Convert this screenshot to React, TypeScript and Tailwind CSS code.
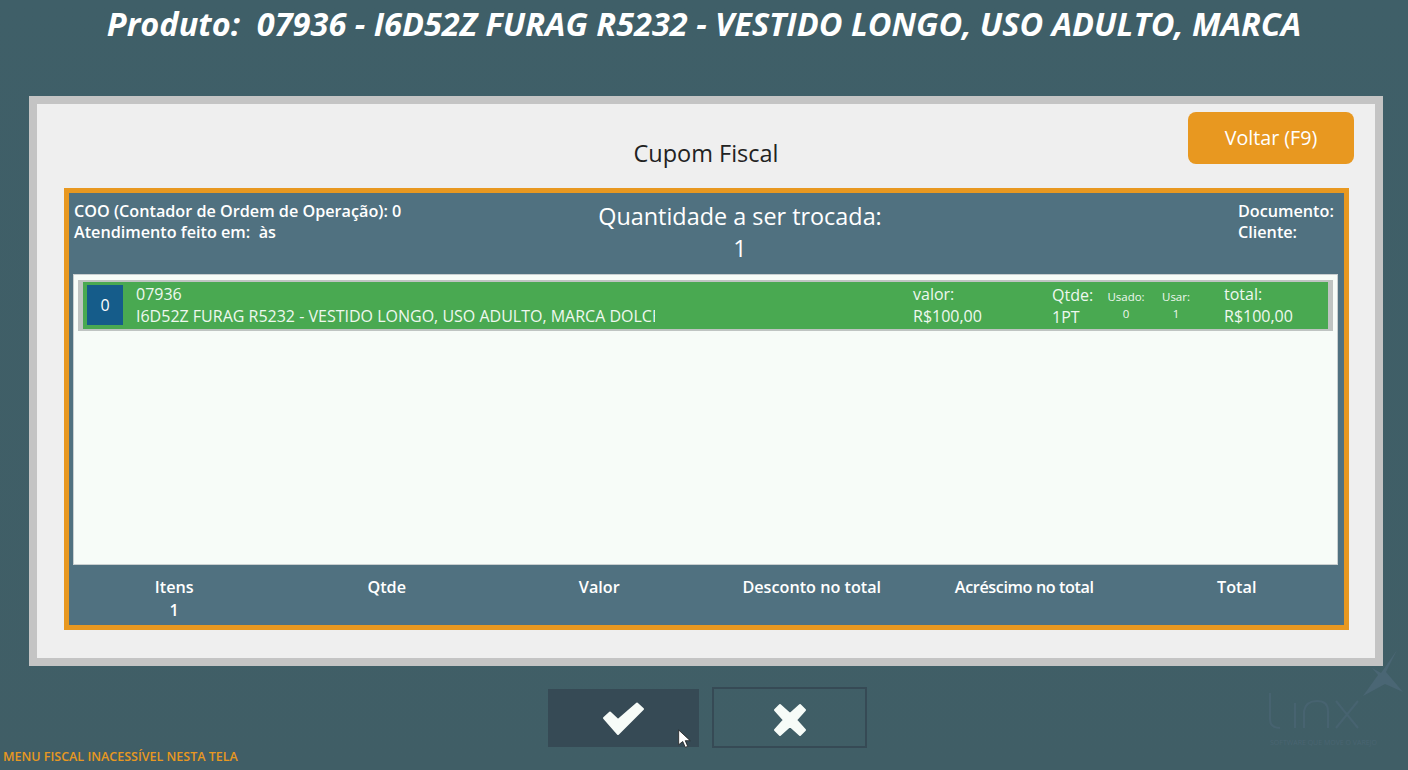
const font = { fontFamily: '"Open Sans", "Noto Sans", sans-serif' };

function Logo() {
  return (
    <div className="absolute left-[1260px] top-[645px] w-[148px] h-[110px]">
      <svg viewBox="0 0 148 110" className="w-full h-full" fill="none">
        <path d="M137 5 L126 27 L143 47 L125 39 L103 51 L118 30 L112 23 L121 28 Z" fill="#4a6674" />
        <path d="M10 48 V74 Q10 83 20 83 M35 58 V83 M44 83 V66 Q46 56 57 56 Q68 56 68 66 V83 M76 56 L98 83 M98 56 L76 83" stroke="#476370" strokeWidth="2" />
      </svg>
      <div className="absolute left-[10px] top-[93px] text-[7px] leading-[9px] whitespace-nowrap text-[#4a6572]">SOFTWARE QUE MOVE O VAREJO</div>
    </div>
  );
}

function Item({ a, b, className }: { a: string; b: string; className: string }) {
  return (
    <div className={className}>
      <div className="leading-[21px]">{a}</div>
      <div className="leading-[22px]">{b}</div>
    </div>
  );
}

export default function App() {
  return (
    <div style={font} className="relative w-[1408px] h-[770px] overflow-hidden bg-gradient-to-b from-[#3f5f68] to-[#405e66] flex flex-col">
      <h1 className="h-[96px] pt-[5px] text-center text-[32.5px] leading-[38px] font-bold italic text-white whitespace-pre">
        {"Produto:  07936 - I6D52Z FURAG R5232 - VESTIDO LONGO, USO ADULTO, MARCA"}
      </h1>
      <div className="mx-[29px] w-[1354px] h-[570px] border-[8px] border-[#c4c4c4] bg-[#efefef] px-[27px] pt-[8px] flex flex-col">
        <div className="relative h-[76px] shrink-0">
          <div className="pt-[23px] text-center text-[23.5px] leading-[36px] text-[#222]">Cupom Fiscal</div>
          <button className="absolute right-[-6px] top-0 w-[166px] h-[52px] rounded-[8px] bg-[#e89820] text-white text-[19.7px]">Voltar (F9)</button>
        </div>
        <div className="w-[1285px] h-[442px] border-[5px] border-[#e89820] bg-[#507180] text-white flex flex-col">
          <div className="relative h-[81px] shrink-0 px-[5px] pt-[8px] flex justify-between text-[16.2px] leading-[21px] font-semibold">
            <div className="whitespace-pre">
              <div>COO (Contador de Ordem de Operação): 0</div>
              <div>Atendimento feito em:  às</div>
            </div>
            <div className="w-[101px]">
              <div>Documento:</div>
              <div>Cliente:</div>
            </div>
            <div className="absolute left-[67px] right-0 top-[7px] text-center text-[23.4px] font-normal leading-[32px]">
              <div>Quantidade a ser trocada:</div>
              <div>1</div>
            </div>
          </div>
          <div className="ml-[4px] w-[1265px] h-[291px] shrink-0 border border-[#c9cfd0] bg-[#f7fcf8] px-[4px] pt-[5px]">
            <div className="h-[51px] border-x-[5px] border-y-[2px] border-[#bfc4c2] bg-[#49a951] flex items-stretch text-[16px] text-[#eef8ef]">
              <div className="ml-[4px] mt-[3px] w-[36px] h-[40px] bg-[#155c8a] text-white flex items-center justify-center text-[16px]">0</div>
              <Item a="07936" b="I6D52Z FURAG R5232 - VESTIDO LONGO, USO ADULTO, MARCA DOLCE" className="ml-[13px] mt-[2px] w-[519px] overflow-hidden whitespace-nowrap" />
              <Item a="valor:" b="R$100,00" className="ml-[258px] mt-[2px] w-[139px]" />
              <Item a="Qtde:" b="1PT" className="w-[47px] mt-[3px]" />
              <div className="w-[54px] pt-[6px] text-center text-[11.5px] leading-[17px]"><div>Usado:</div><div>0</div></div>
              <div className="w-[44px] ml-[1px] pt-[6px] text-center text-[11.5px] leading-[17px]"><div>Usar:</div><div>1</div></div>
              <Item a="total:" b="R$100,00" className="ml-[26px] mt-[2px] w-[100px]" />
            </div>
          </div>
          <div className="flex-1 grid grid-cols-6 pt-[11px] text-center text-[16.2px] font-semibold leading-[23px]">
            <div className="pr-[2px]"><div>Itens</div><div>1</div></div>
            <div className="pr-[2px]">Qtde</div>
            <div className="pr-[2px]">Valor</div>
            <div className="pr-[2px]">Desconto no total</div>
            <div className="pr-[2px] tracking-[-0.4px]">Acréscimo no total</div>
            <div className="pr-[2px]">Total</div>
          </div>
        </div>
      </div>
      <div className="flex-1 relative">
        <div className="absolute left-[548px] top-[21px] flex gap-[13px]">
          <button className="mt-[2px] w-[151px] h-[58px] bg-[#364a55] flex items-center justify-center">
            <svg viewBox="0 0 48 40" className="mt-[4px] w-[48px] h-[40px]" fill="#f7fcf8"><path d="M4 18 L10 12.5 L18 20 L37 3.5 L43 9 L18 34 Z" strokeLinejoin="round" stroke="#f7fcf8" strokeWidth="2" /></svg>
          </button>
          <button className="w-[155px] h-[61px] border-[2px] border-[#364a55] flex items-center justify-center">
            <svg viewBox="0 0 36 36" className="mt-[4px] w-[36px] h-[36px]" fill="#f7fcf8"><path d="M8 3 L18 12 L28 3 L33 8 L24 18 L33 28 L28 33 L18 24 L8 33 L3 28 L12 18 L3 8 Z" stroke="#f7fcf8" strokeWidth="2" strokeLinejoin="round" /></svg>
          </button>
        </div>
        <div className="absolute left-[3px] bottom-[5px] text-[12.5px] font-semibold text-[#e89820] leading-[16px]">MENU FISCAL INACESSÍVEL NESTA TELA</div>
        <svg viewBox="0 0 17 24" className="absolute left-[677px] top-[63px] w-[14px] h-[20px]" fill="#fff" stroke="#222"><path d="M2 1 V19 L7 15 L10 22 L13 21 L10 14 L16 14 Z" /></svg>
      </div>
      <Logo />
    </div>
  );
}
